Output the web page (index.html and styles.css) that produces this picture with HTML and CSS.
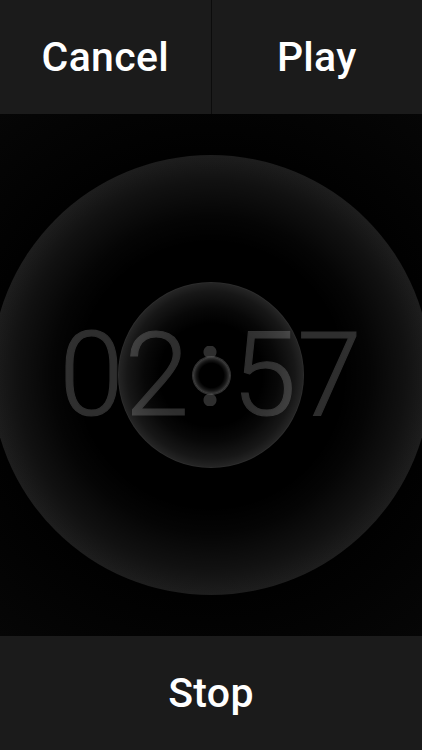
FILE: index.html
```html
<!DOCTYPE html>
<html lang="en">
<head>
<meta charset="utf-8">
<title>Timer</title>
<link rel="stylesheet" href="styles.css">
</head>
<body>
<div class="app">
  <header class="topbar">
    <button class="btn btn-left">Cancel</button>
    <div class="divider"></div>
    <button class="btn btn-right">Play</button>
  </header>
  <main class="stage">
    <div class="time"><span class="digits">02</span><span class="colon">:</span><span class="digits">57</span></div>
    <div class="ring ring-lg"></div>
    <div class="ring ring-md"></div>
    <div class="ring ring-sm"></div>
  </main>
  <footer class="bottombar">
    <button class="btn">Stop</button>
  </footer>
</div>
</body>
</html>
```
FILE: styles.css
```css
* { box-sizing: border-box; }
html, body {
  margin: 0;
  padding: 0;
  background: #000;
}
.app {
  width: 422px;
  height: 750px;
  display: flex;
  flex-direction: column;
  overflow: hidden;
  font-family: Roboto, "Liberation Sans", sans-serif;
}
.topbar {
  height: 114px;
  display: flex;
  background: #1b1b1b;
}
.btn {
  flex: 1;
  border: 0;
  margin: 0;
  padding: 0;
  background: transparent;
  color: #fff;
  font-family: Roboto, "Liberation Sans", sans-serif;
  font-weight: 500;
  font-size: 41px;
  letter-spacing: 0.3px;
  display: flex;
  align-items: center;
  justify-content: center;
}
.divider {
  width: 1px;
  background: #0c0c0c;
}
.stage {
  flex: 1;
  display: grid;
  grid-template-columns: 440px;
  grid-template-rows: 100%;
  justify-content: center;
  align-items: center;
  justify-items: center;
  background: radial-gradient(circle at 50% 50%, #000 0%, #000 60%, #060606 100%);
  overflow: hidden;
}
.stage > * {
  grid-area: 1 / 1;
}
.time {
  display: flex;
  align-items: center;
  color: #2e2e2e;
  margin-top: 2px;
}
.digits {
  font-family: Roboto, "Liberation Sans", sans-serif;
  font-weight: 300;
  font-size: 116px;
  line-height: 116px;
  letter-spacing: 1px;
  padding-bottom: 2px;
  -webkit-text-stroke: 1.1px #2e2e2e;
}
.colon {
  width: 40px;
  height: 60px;
  margin-right: 2px;
  font-size: 40px;
  line-height: 60px;
  text-align: center;
  color: transparent;
  overflow: hidden;
  background:
    radial-gradient(circle at 50% 6px, #2e2e2e 6px, rgba(46,46,46,0) 7px),
    radial-gradient(circle at 50% 54px, #2e2e2e 6px, rgba(46,46,46,0) 7px);
}
.ring {
  border-radius: 50%;
}
.ring-lg {
  width: 440px;
  height: 440px;
  background: radial-gradient(circle closest-side,
    rgba(255,255,255,0) 0%,
    rgba(255,255,255,0) 60%,
    rgba(255,255,255,0.02) 72%,
    rgba(255,255,255,0.065) 88%,
    rgba(255,255,255,0.115) 100%);
}
.ring-md {
  width: 186px;
  height: 186px;
  background: radial-gradient(circle closest-side,
    rgba(255,255,255,0) 0%,
    rgba(255,255,255,0) 55%,
    rgba(255,255,255,0.03) 72%,
    rgba(255,255,255,0.09) 90%,
    rgba(255,255,255,0.15) 100%);
  box-shadow: inset 0 0 0 1px rgba(255,255,255,0.03);
}
.ring-sm {
  width: 37px;
  height: 37px;
  background: radial-gradient(circle closest-side,
    #000 0%,
    #000 66%,
    #151515 82%,
    #303030 94%,
    #4a4a4a 100%);
  box-shadow: 0 0 0 1px rgba(110,110,110,0.45);
  margin-top: 1px;
}
.bottombar {
  height: 114px;
  display: flex;
  background: #1b1b1b;
}
```
